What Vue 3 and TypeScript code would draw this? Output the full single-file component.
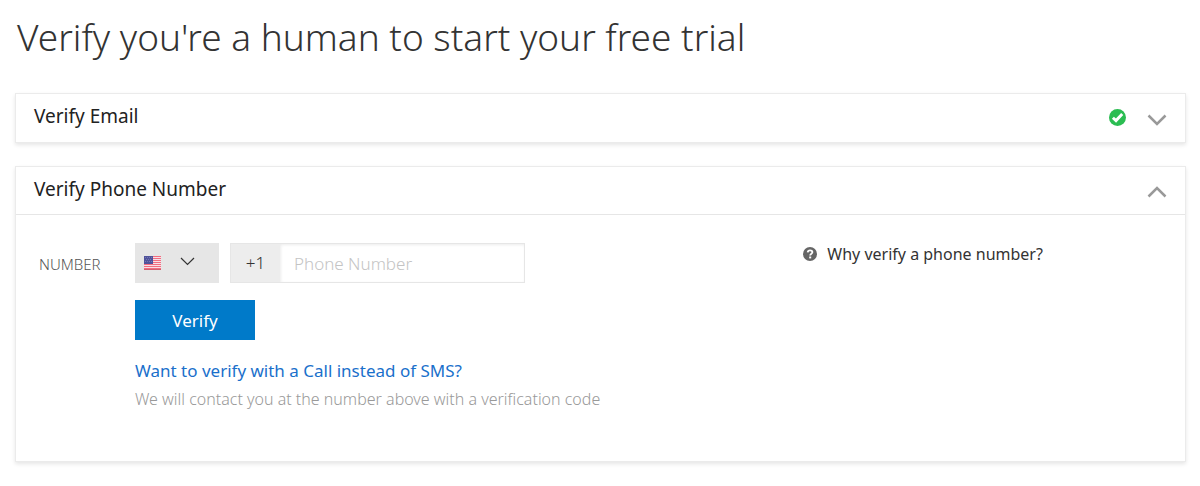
<script setup lang="ts">
import { ref } from 'vue'

const emailOpen = ref(false)
const phoneOpen = ref(true)
const country = ref('US')
const phone = ref('')
const stripes = [0, 2, 4, 6, 8, 10, 12]
</script>

<template>
  <main class="page">
    <h1>Verify you're a human to start your free trial</h1>

    <section class="panel">
      <h2>
        <button class="panel-head" type="button" :aria-expanded="emailOpen" @click="emailOpen = !emailOpen">
          <span class="panel-title">Verify Email</span>
          <svg class="check" viewBox="0 0 17 17" role="img" aria-label="Verified">
            <circle cx="8.5" cy="8.5" r="8.5" fill="#2bbd52" />
            <path d="M3.900 8.700 7 11.600 13.200 4.900" fill="none" stroke="#fff" stroke-width="2.900" />
          </svg>
          <svg class="chevron" :class="{ flipped: emailOpen }" viewBox="0 0 20 12" aria-hidden="true">
            <path d="M1.500 1.500 10 10 18.500 1.500" />
          </svg>
        </button>
      </h2>
    </section>

    <section class="panel" :class="{ open: phoneOpen }">
      <h2>
        <button class="panel-head" type="button" :aria-expanded="phoneOpen" @click="phoneOpen = !phoneOpen">
          <span class="panel-title">Verify Phone Number</span>
          <svg class="chevron" :class="{ flipped: phoneOpen }" viewBox="0 0 20 12" aria-hidden="true">
            <path d="M1.500 1.500 10 10 18.500 1.500" />
          </svg>
        </button>
      </h2>

      <div v-if="phoneOpen" class="panel-body">
        <form class="form" @submit.prevent>
          <label class="label" for="phone">NUMBER</label>
          <div class="fields">
            <div class="row">
              <div class="country">
                <svg class="flag" viewBox="0 0 17 14" aria-hidden="true">
                  <rect width="17" height="14" fill="#f8dfe6" />
                  <rect v-for="y in stripes" :key="y" :y="y" width="17" height="1" fill="#f26d80" />
                  <rect y="13" width="17" height="1" fill="#d0606f" />
                  <rect width="9" height="8" fill="#50539b" />
                  <path d="M1 1.500h7M2 3.500h6M1 5.500h7" stroke="#7477b3" stroke-width="1" stroke-dasharray="1 1" />
                </svg>
                <svg class="caret" viewBox="0 0 15 9" aria-hidden="true">
                  <path d="M1 1 7.500 7.500 14 1" />
                </svg>
                <select v-model="country" aria-label="Country">
                  <option value="US">US</option>
                </select>
              </div>
              <div class="phone">
                <span class="prefix">+1</span>
                <input id="phone" v-model="phone" type="tel" placeholder="Phone Number" />
              </div>
            </div>
            <button class="verify" type="submit">Verify</button>
            <a class="call" href="#">Want to verify with a Call instead of SMS?</a>
            <p class="note">We will contact you at the number above with a verification code</p>
          </div>
        </form>
        <aside class="help">
          <svg class="question" viewBox="0 0 14 14" aria-hidden="true">
            <circle cx="7" cy="7" r="7" fill="#666" />
            <path d="M4.700 5.300C4.900 3.900 5.800 3.400 7 3.400c1.400 0 2.400.7 2.400 1.900C9.400 6.700 7.200 6.800 7.200 8.500" fill="none" stroke="#fff" stroke-width="1.800" />
            <rect x="6.200" y="9.500" width="2" height="1.900" fill="#fff" />
          </svg>
          <span>Why verify a phone number?</span>
        </aside>
      </div>
    </section>
  </main>
</template>

<style>
body {
  margin: 0;
  background: #fff;
}
</style>

<style scoped>
.page {
  padding: 12px 14px 0 15px;
  font-family: "Noto Sans", "Open Sans", sans-serif;
  font-size: 16px;
  color: #333;
}

.page * {
  box-sizing: border-box;
}

h1 {
  margin: 0 0 31px;
  padding-left: 2px;
  font-size: 37px;
  line-height: 50px;
  font-weight: 300;
  color: #333;
}

h2 {
  margin: 0;
  font-size: 19px;
  font-weight: 400;
}

button,
input {
  font-family: inherit;
}

.panel {
  margin-bottom: 23px;
  background: #fff;
  border: 1px solid #ebebeb;
  box-shadow: 0 2px 4px rgba(0, 0, 0, 0.1);
}

.panel-head {
  display: flex;
  align-items: center;
  width: 100%;
  height: 48px;
  padding: 0 18px 2px;
  border: 0;
  background: none;
  text-align: left;
  cursor: pointer;
}

.open .panel-head {
  border-bottom: 1px solid #e6e6e6;
}

.panel-title {
  flex: 1;
  padding-bottom: 2px;
  font-size: 19px;
  line-height: 24px;
  color: #222;
}

.check {
  width: 17px;
  height: 17px;
  margin-right: 21px;
}

.chevron {
  width: 20px;
  height: 12px;
  margin-top: 5px;
}

.chevron path {
  fill: none;
  stroke: #999;
  stroke-width: 2.500;
}

.flipped {
  transform: rotate(180deg);
}

.panel-body {
  display: grid;
  grid-template-columns: 2fr 1fr;
  padding: 28px 0 50px;
}

.form {
  display: flex;
}

.label {
  flex: 0 0 119px;
  padding-left: 23px;
  font-size: 15px;
  line-height: 42px;
  font-weight: 300;
  color: #555;
}

.fields {
  display: flex;
  flex-direction: column;
  align-items: flex-start;
}

.row {
  display: flex;
  gap: 11px;
  margin-bottom: 17px;
}

.country {
  position: relative;
  display: flex;
  align-items: center;
  gap: 19px;
  width: 84px;
  height: 40px;
  padding-left: 9px;
  background: #e6e6e6;
}

.country select {
  position: absolute;
  inset: 0;
  width: 100%;
  opacity: 0;
  cursor: pointer;
}

.flag {
  width: 17px;
  height: 14px;
}

.caret {
  width: 15px;
  height: 9px;
  margin-bottom: 3px;
}

.caret path {
  fill: none;
  stroke: #333;
  stroke-width: 1.200;
}

.phone {
  display: flex;
  width: 295px;
  height: 40px;
  border: 1px solid #e6e6e6;
}

.prefix {
  width: 49px;
  background: #ededed;
  font-size: 17px;
  line-height: 38px;
  font-weight: 300;
  text-align: center;
}

.phone input {
  flex: 1;
  min-width: 0;
  padding: 0 14px;
  border: 0;
  background: #fff;
  box-shadow: inset 1px 1px 3px rgba(0, 0, 0, 0.08);
  font-size: 17px;
  font-weight: 300;
  color: #333;
}

.phone input::placeholder {
  color: #c4c4c4;
  opacity: 1;
}

.verify {
  width: 120px;
  height: 40px;
  margin-bottom: 19px;
  border: 0;
  background: #007ac9;
  font-size: 17px;
  color: #fff;
  cursor: pointer;
}

.call {
  margin-bottom: 4px;
  font-size: 17px;
  line-height: 24px;
  color: #1a70cb;
  text-decoration: none;
}

.note {
  margin: 0;
  font-size: 16px;
  line-height: 24px;
  font-weight: 300;
  color: #999;
}

.help {
  display: flex;
  align-items: center;
  gap: 10px;
  height: 22px;
  padding-left: 8px;
  font-size: 16px;
  color: #333;
}

.question {
  width: 14px;
  height: 14px;
}
</style>
